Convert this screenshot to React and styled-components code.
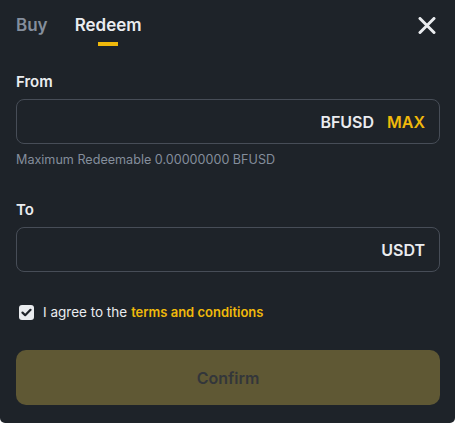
import React, { useState } from 'react';
import styled, { createGlobalStyle } from 'styled-components';

const GlobalStyle = createGlobalStyle`
  html, body {
    margin: 0;
    padding: 0;
    background: #ffffff;
  }
  body {
    font-family: Inter, "Noto Sans", Arial, sans-serif;
    -webkit-font-smoothing: antialiased;
  }
  * {
    box-sizing: border-box;
  }
`;

const Panel = styled.div`
  width: 455px;
  height: 423px;
  background: #1e2329;
  border-radius: 0 0 5px 5px;
  padding: 0 15px 0 16px;
  display: flex;
  flex-direction: column;
  color: #eaecef;
`;

const Header = styled.div`
  display: flex;
  align-items: flex-start;
  justify-content: space-between;
  padding-top: 13px;
  height: 46px;
`;

const Tabs = styled.div`
  display: flex;
  gap: 27px;
`;

const Tab = styled.button`
  display: flex;
  flex-direction: column;
  align-items: center;
  background: none;
  border: none;
  padding: 0;
  cursor: pointer;
  font-family: inherit;
  font-size: 17px;
  font-weight: 600;
  line-height: 24px;
  color: ${props => (props.active ? '#eaecef' : '#848e9c')};
`;

const Underline = styled.span`
  display: block;
  width: 20px;
  height: 4px;
  margin-top: 5px;
  background: ${props => (props.active ? '#f0b90b' : 'transparent')};
`;

const CloseButton = styled.button`
  background: none;
  border: none;
  padding: 0;
  margin: 2px 3px 0 0;
  width: 20px;
  height: 20px;
  display: flex;
  align-items: center;
  justify-content: center;
  cursor: pointer;
`;

const Label = styled.div`
  font-size: 15px;
  font-weight: 600;
  line-height: 20px;
  margin-top: ${props => props.gap}px;
`;

const Field = styled.div`
  margin-top: 7px;
  height: 45px;
  border: 1px solid #474d57;
  border-radius: 8px;
  display: flex;
  align-items: center;
  justify-content: flex-end;
  gap: 13px;
  padding: 0 14px;
`;

const Unit = styled.span`
  font-size: 16px;
  font-weight: 600;
  color: #eaecef;
`;

const MaxLink = styled.span`
  font-size: 16px;
  font-weight: 600;
  color: #f0b90b;
  cursor: pointer;
`;

const Hint = styled.div`
  margin-top: 8px;
  font-size: 12.6px;
  line-height: 16px;
  color: #848e9c;
`;

const AgreeRow = styled.label`
  margin-top: 30px;
  height: 20px;
  display: flex;
  align-items: center;
  gap: 9px;
  padding-left: 3px;
  font-size: 13.5px;
  cursor: pointer;
`;

const Box = styled.span`
  width: 15px;
  height: 15px;
  border-radius: 3px;
  background: ${props => (props.checked ? '#eaecef' : 'transparent')};
  border: ${props => (props.checked ? 'none' : '1px solid #848e9c')};
  display: flex;
  align-items: center;
  justify-content: center;
`;

const Terms = styled.span`
  color: #f0b90b;
  font-size: 13px;
  font-weight: 600;
  margin-left: 4px;
`;

const ConfirmButton = styled.button`
  margin-top: 28px;
  height: 55px;
  border: none;
  border-radius: 10px;
  background: #5f5834;
  color: #33363a;
  font-family: inherit;
  font-size: 16px;
  font-weight: 600;
  cursor: not-allowed;
`;

export default function App() {
  const [tab, setTab] = useState('redeem');
  const [agreed, setAgreed] = useState(true);

  return (
    <>
      <GlobalStyle />
      <Panel>
        <Header>
          <Tabs>
            <Tab active={tab === 'buy'} onClick={() => setTab('buy')}>
              Buy
              <Underline active={tab === 'buy'} />
            </Tab>
            <Tab active={tab === 'redeem'} onClick={() => setTab('redeem')}>
              Redeem
              <Underline active={tab === 'redeem'} />
            </Tab>
          </Tabs>
          <CloseButton aria-label="Close">
            <svg width="18" height="17" viewBox="0 0 18 17">
              <path d="M2 1.5 L16 15.5 M16 1.5 L2 15.5" stroke="#eaecef" strokeWidth="3" strokeLinecap="round" />
            </svg>
          </CloseButton>
        </Header>

        <Label gap={26}>From</Label>
        <Field>
          <Unit>BFUSD</Unit>
          <MaxLink>MAX</MaxLink>
        </Field>
        <Hint>Maximum Redeemable 0.00000000 BFUSD</Hint>

        <Label gap={32}>To</Label>
        <Field>
          <Unit>USDT</Unit>
        </Field>

        <AgreeRow onClick={() => setAgreed(a => !a)}>
          <Box checked={agreed}>
            {agreed && (
              <svg width="11" height="9" viewBox="0 0 11 9">
                <path d="M1.5 4.6 L4.2 7.2 L9.5 1.8" fill="none" stroke="#1e2329" strokeWidth="2.2" strokeLinecap="round" strokeLinejoin="round" />
              </svg>
            )}
          </Box>
          <span>
            I agree to the<Terms>terms and conditions</Terms>
          </span>
        </AgreeRow>

        <ConfirmButton disabled>Confirm</ConfirmButton>
      </Panel>
    </>
  );
}
